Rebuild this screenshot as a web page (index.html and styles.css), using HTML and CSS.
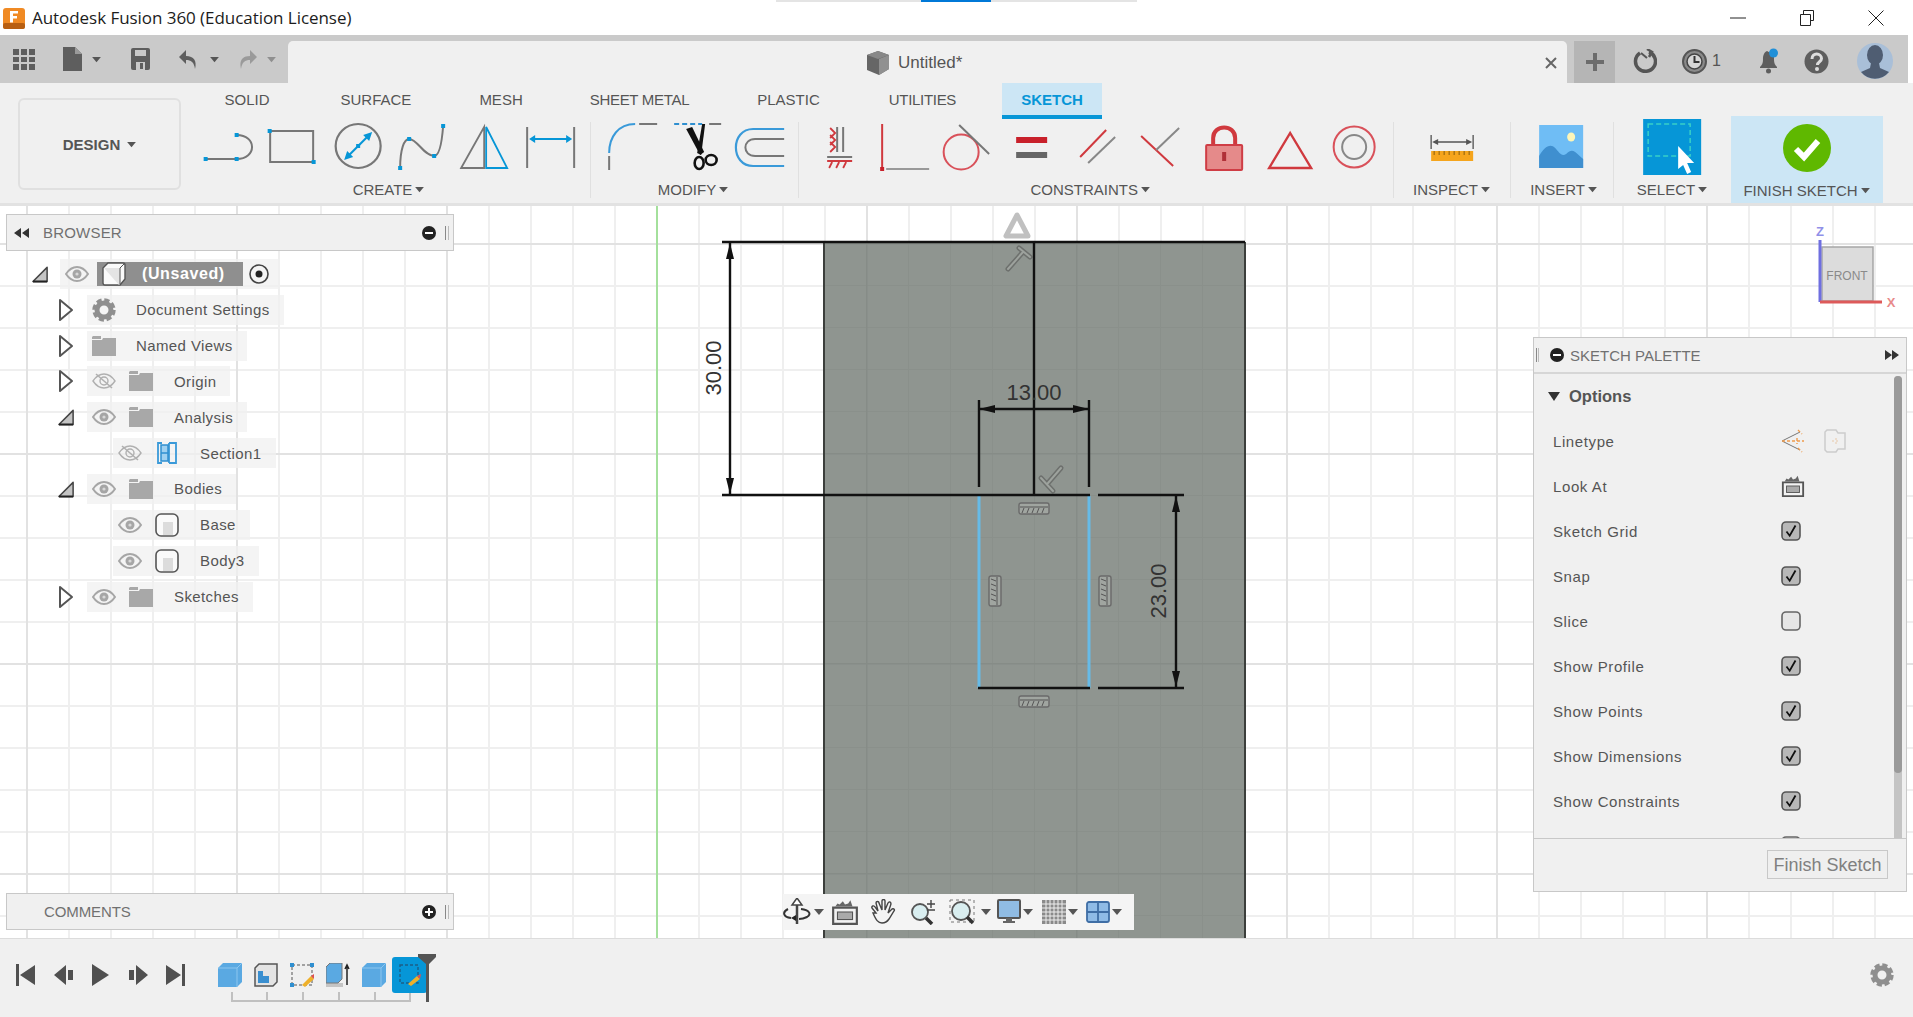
FILE: index.html
```html
<!DOCTYPE html>
<html lang="en">
<head>
<meta charset="utf-8">
<title>Autodesk Fusion 360</title>
<link rel="stylesheet" href="styles.css">
</head>
<body>
<svg class="defs" width="0" height="0">
  <defs>
    <symbol id="eye" viewBox="0 0 24 16"><path d="M1 8C5 2 9 1 12 1s7 1 11 7c-4 6-8 7-11 7S5 14 1 8z" fill="none" stroke="#a6a6a6" stroke-width="2"/><circle cx="12" cy="8" r="4.500" fill="#a6a6a6"/><circle cx="12" cy="8" r="1.600" fill="#d8d8d8"/></symbol>
    <symbol id="eye-off" viewBox="0 0 24 16"><path d="M1 8C5 2 9 1 12 1s7 1 11 7c-4 6-8 7-11 7S5 14 1 8z" fill="none" stroke="#b0b0b0" stroke-width="1.400"/><circle cx="12" cy="8" r="4" fill="none" stroke="#b0b0b0" stroke-width="1.400"/><path d="M4 1l16 14" stroke="#b0b0b0" stroke-width="1.600"/></symbol>
    <symbol id="folder" viewBox="0 0 24 20"><path d="M0 3h9v-3H1L0 1zM0 4h10l1-2h13v18H0z" fill="#a8a8a8"/></symbol>
    <symbol id="body" viewBox="0 0 24 24"><rect x="1" y="1" width="22" height="22" rx="5" fill="#fafafa" stroke="#555" stroke-width="1.600"/><rect x="8" y="9" width="10" height="13" fill="#dcdcdc"/></symbol>
    <symbol id="root-cube" viewBox="0 0 24 24"><path d="M6 1h15a2 2 0 0 1 2 2v14l-5 6H3a2 2 0 0 1-2-2V6z" fill="#fafafa" stroke="#555" stroke-width="1.400"/><path d="M2 6h16v17h-1" fill="#e4e4e4"/><path d="M18 6v17M18 6l5-5" stroke="#555" stroke-width="1"/></symbol>
    <symbol id="open" viewBox="0 0 16 24"><path d="M2 2l12 10L2 22z" fill="#fff" stroke="#555" stroke-width="2" stroke-linejoin="round"/></symbol>
    <symbol id="closed" viewBox="0 0 18 18"><path d="M1 17L16 2v15z" fill="#c4c4c4" stroke="#444" stroke-width="1.600" stroke-linejoin="round"/><path d="M1 17h15" stroke="#222" stroke-width="2"/></symbol>
    <symbol id="caret" viewBox="0 0 10 8"><path d="M0 1h10L5 7z" fill="#555"/></symbol>
    <symbol id="gear" viewBox="0 0 24 24"><circle cx="12" cy="12" r="7" fill="none" stroke="#8f8f8f" stroke-width="5"/><circle cx="12" cy="12" r="9.700" fill="none" stroke="#8f8f8f" stroke-width="4" stroke-dasharray="5 2.620"/></symbol>
    <symbol id="check" viewBox="0 0 20 20"><rect x="1" y="1" width="18" height="18" rx="4" fill="#b8b8b8" stroke="#555" stroke-width="1.600"/><path d="M5.500 10.500l3.200 4.200L14.500 4.500" fill="none" stroke="#111" stroke-width="1.800"/></symbol>
    <symbol id="uncheck" viewBox="0 0 20 20"><rect x="1" y="1" width="18" height="18" rx="4" fill="#e6e6e6" stroke="#666" stroke-width="1.600"/></symbol>
    <symbol id="lookat" viewBox="0 0 26 24"><path d="M2 8h22v15H2z" fill="#f2f2f2" stroke="#555" stroke-width="2"/><rect x="6" y="12" width="14" height="7" fill="#aaa" stroke="#555"/><path d="M4 7l2-3 2 1 3-3 2 3 3-1 2-3 2 6" fill="#666"/></symbol>
    <symbol id="hatch-h" viewBox="0 0 32 13"><rect x="1" y="1" width="30" height="11" rx="2" fill="#a0a5a0" stroke="#6a6a6a" stroke-width="1.400"/><path d="M2 5h28" stroke="#555"/><path d="M6 6l-2 5M11 6l-2 5M16 6l-2 5M21 6l-2 5M26 6l-2 5" stroke="#555"/></symbol>
    <symbol id="hatch-v" viewBox="0 0 14 32"><rect x="1" y="1" width="12" height="30" rx="2" fill="#a0a5a0" stroke="#6a6a6a" stroke-width="1.400"/><path d="M9 2v28" stroke="#555"/><path d="M8 6L3 4M8 11L3 9M8 16l-5-2M8 21l-5-2M8 26l-5-2" stroke="#555"/></symbol>
    <symbol id="cube-blue" viewBox="0 0 24 24"><path d="M0 5l5-5h19v19l-5 5H0z" fill="#5aa9e2"/><path d="M0 5h19v19M19 5l5-5" fill="none" stroke="#8cc6ef" stroke-width="1"/></symbol>
    <pattern id="minor" x="26" y="243" width="42" height="42" patternUnits="userSpaceOnUse"><path d="M0 0V42M0 0H42" stroke="#8a908b" stroke-width="2"/></pattern>
    <pattern id="major" x="26" y="243" width="210" height="210" patternUnits="userSpaceOnUse"><path d="M0 0V210M0 0H210" stroke="#868c87" stroke-width="3"/></pattern>
  </defs>
</svg>

<div class="winbar-sliver"><span class="sliver-blue"></span></div>

<header class="titlebar">
  <svg class="app-logo" width="22" height="21" viewBox="0 0 22 21"><rect width="22" height="21" rx="3" fill="#f08a24"/><rect y="15" width="22" height="6" rx="2" fill="#b85f12"/><path d="M7 3h8v2.500H10v2.500h4v2.500h-4v4H7z" fill="#fff"/></svg>
  <span class="app-title">Autodesk Fusion 360 (Education License)</span>
  <div class="win-controls">
    <svg width="16" height="16" viewBox="0 0 16 16"><path d="M0 8h16" stroke="#222"/></svg>
    <svg width="16" height="16" viewBox="0 0 16 16"><path d="M1.500 4.500h10v11h-10zM4.500 4V.5h10v10H12" fill="none" stroke="#222"/></svg>
    <svg width="16" height="16" viewBox="0 0 16 16"><path d="M.5.5l15 15M15.500.5l-15 15" stroke="#222"/></svg>
  </div>
</header>

<div class="tabstrip">
  <div class="qat">
    <svg class="q-grid" width="22" height="21" viewBox="0 0 22 21"><path d="M0 0h6v6H0zM8 0h6v6H8zM16 0h6v6h-6zM0 8h6v5H0zM8 8h6v5H8zM16 8h6v5h-6zM0 15h6v6H0zM8 15h6v6H8zM16 15h6v6h-6z" fill="#5e5e5e"/></svg>
    <svg class="q-file" width="19" height="24" viewBox="0 0 19 24"><path d="M0 0h12l7 7v17H0z" fill="#5e5e5e"/><path d="M12 0v7h7" fill="#9a9a9a"/></svg>
    <svg class="q-caret" width="9" height="7"><use href="#caret"/></svg>
    <svg class="q-save" width="19" height="22" viewBox="0 0 19 22"><path d="M0 2a2 2 0 0 1 2-2h15a2 2 0 0 1 2 2v18a2 2 0 0 1-2 2H2a2 2 0 0 1-2-2z" fill="#5e5e5e"/><path d="M4 2h11v6H4zM5 14h9v8H5z" fill="#c9c9c9"/><path d="M9 15h3v6H9z" fill="#5e5e5e"/></svg>
    <svg class="q-undo" width="20" height="21" viewBox="0 0 20 21"><path d="M8 1L1 8l7 7v-4c5 0 8 2 9 9 2-8-1-13-9-13z" fill="#5e5e5e"/></svg>
    <svg class="q-caret2" width="9" height="7"><use href="#caret"/></svg>
    <svg class="q-redo" width="20" height="21" viewBox="0 0 20 21"><path d="M12 1l7 7-7 7v-4c-5 0-8 2-9 9-2-8 1-13 9-13z" fill="#9a9a9a"/></svg>
    <svg class="q-caret3 faded" width="9" height="7"><use href="#caret"/></svg>
  </div>
  <div class="doc-tab">
    <svg class="doc-cube" width="24" height="24" viewBox="0 0 24 24"><path d="M12 0l11 4v14l-10 6-12-5V4z" fill="#666"/><path d="M1 4l11 4 11-4-11-4z" fill="#888"/><path d="M13 8l10-4v14l-10 6z" fill="#909090"/></svg>
    <span class="doc-name">Untitled*</span>
    <svg class="doc-close" width="12" height="12" viewBox="0 0 12 12"><path d="M1 1l10 10M11 1L1 11" stroke="#666" stroke-width="2"/></svg>
  </div>
  <div class="plus-box"><svg width="18" height="18" viewBox="0 0 18 18"><path d="M7 0h4v7h7v4h-7v7H7v-7H0V7h7z" fill="#6c6c6c"/></svg></div>
  <div class="user-tools">
    <svg class="u-job" width="25" height="25" viewBox="0 0 25 25"><path d="M8 4a10 10 0 1 0 9-1" fill="none" stroke="#555" stroke-width="3.500"/><path d="M15 0l5 3-3 5" fill="none" stroke="#555" stroke-width="2.500"/><path d="M9 4l6 5" stroke="#555" stroke-width="2"/></svg>
    <svg class="u-clock" width="25" height="25" viewBox="0 0 25 25"><circle cx="12.500" cy="12.500" r="11.500" fill="#8a8a8a" stroke="#555" stroke-width="2"/><circle cx="12.500" cy="12.500" r="7.500" fill="#d6d6d6" stroke="#444" stroke-width="1.500"/><path d="M12.500 7v6h5" fill="none" stroke="#333" stroke-width="2"/></svg>
    <span class="u-count">1</span>
    <svg class="u-bell" width="20" height="26" viewBox="0 0 20 26"><path d="M8 3c-4 2-4 6-4 9 0 3-1 5-3 7v1h17v-1c-2-2-3-4-3-7V7z" fill="#5e5e5e"/><circle cx="9.500" cy="23" r="2.500" fill="#5e5e5e"/><circle cx="14.500" cy="5" r="4.500" fill="#1f8fd8"/></svg>
    <svg class="u-help" width="25" height="25" viewBox="0 0 25 25"><circle cx="12.500" cy="12.500" r="12" fill="#5e5e5e"/><path d="M8 10c0-7 9.500-6 9.500-.500 0 3.500-4 3-4 6.500" fill="none" stroke="#ddd" stroke-width="3"/><circle cx="13" cy="20" r="2" fill="#ddd"/></svg>
    <svg class="u-avatar" width="36" height="36" viewBox="0 0 36 36"><circle cx="18" cy="18" r="18" fill="#a9bfd8"/><ellipse cx="18" cy="12" rx="8" ry="10" fill="#4f5d72"/><path d="M14 20h8l1 5 9 4a18 18 0 0 1-28 0l9-4z" fill="#4f5d72"/></svg>
  </div>
</div>

<section class="ribbon">
  <div class="design-btn"><span>DESIGN</span><svg width="9" height="7"><use href="#caret"/></svg></div>
  <div class="ribbon-main">
    <nav class="tabs">
      <span class="tab t-solid">SOLID</span>
      <span class="tab t-surface">SURFACE</span>
      <span class="tab t-mesh">MESH</span>
      <span class="tab t-sheet">SHEET METAL</span>
      <span class="tab t-plastic">PLASTIC</span>
      <span class="tab t-util">UTILITIES</span>
      <span class="tab tab-active">SKETCH</span>
    </nav>
    <div class="groups">
      <div class="group g-create">
        <div class="tools">
          <svg class="tool" viewBox="0 0 64 56"><path d="M8.500 40h31M39.500 16C60 16 60 40 39.500 40" fill="none" stroke="#777" stroke-width="2"/><path d="M6.500 38h4v4h-4zM37.500 38h4v4h-4zM37.500 14h4v4h-4z" fill="#0696d7"/></svg>
          <svg class="tool" viewBox="0 0 64 56"><path d="M9 12h43v31H9z" fill="none" stroke="#777" stroke-width="2"/><path d="M6.500 10h4v4h-4zM50.500 41h4v4h-4z" fill="#0696d7"/></svg>
          <svg class="tool" viewBox="0 0 64 56"><ellipse cx="32" cy="27" rx="22.500" ry="22" fill="none" stroke="#777" stroke-width="2.200"/><path d="M22 37l20-20" stroke="#0696d7" stroke-width="2"/><path d="M18 41l3-9 6 6zM46 13l-3 9-6-6z" fill="#0696d7"/><path d="M30 25h4v4h-4z" fill="#0696d7"/></svg>
          <svg class="tool" viewBox="0 0 64 56"><path d="M10 49C10 30 14 20 19 20 27 20 34 37 44 37 50 37 52 20 53 7" fill="none" stroke="#777" stroke-width="2"/><path d="M8 47h4v4H8zM17 18h4v4h-4zM42 35h4v4h-4zM51 5h4v4h-4z" fill="#0696d7"/></svg>
          <svg class="tool" viewBox="0 0 64 56"><path d="M7 49L30 8v41z" fill="none" stroke="#777" stroke-width="1.800"/><path d="M32 8l21 41H32z" fill="none" stroke="#0696d7" stroke-width="1.800"/></svg>
          <svg class="tool" viewBox="0 0 64 56"><path d="M8 8v41M55 8v41" stroke="#777" stroke-width="2"/><path d="M12 20h39" stroke="#0696d7" stroke-width="2"/><path d="M10 20l6-4v8zM53 20l-6-4v8z" fill="#0696d7"/></svg>
        </div>
        <div class="glabel l-create">CREATE<svg width="9" height="7"><use href="#caret"/></svg></div>
      </div>
      <div class="sep"></div>
      <div class="group g-modify">
        <div class="tools">
          <svg class="tool" viewBox="0 0 64 56"><path d="M9 34C9 18 18 5 35 5" fill="none" stroke="#3a9ad9" stroke-width="2"/><path d="M39 5h18M9 37v14" stroke="#777" stroke-width="2"/></svg>
          <svg class="tool" viewBox="0 0 64 56"><path d="M10 5h28" stroke="#2f8fd0" stroke-width="2" stroke-dasharray="5 3"/><path d="M45 5h12" stroke="#777" stroke-width="2"/><path d="M22 10l14 26 4-3L28 8z" fill="#111"/><path d="M38 5l-5 29 4 2 4-31z" fill="#111"/><ellipse cx="35" cy="44" rx="4.500" ry="6" fill="none" stroke="#111" stroke-width="2.600"/><ellipse cx="47" cy="41" rx="5.500" ry="5" fill="none" stroke="#111" stroke-width="2.600"/></svg>
          <svg class="tool" viewBox="0 0 64 56"><path d="M56 10H25C2 10 2 47 25 47H56" fill="none" stroke="#3a9ad9" stroke-width="2.200"/><path d="M56 20H27C14 20 14 37 27 37H56" fill="none" stroke="#777" stroke-width="2"/></svg>
        </div>
        <div class="glabel l-modify">MODIFY<svg width="9" height="7"><use href="#caret"/></svg></div>
      </div>
      <div class="sep"></div>
      <div class="group g-constraints">
        <div class="tools">
          <svg class="tool" viewBox="0 0 64 56"><path d="M29 8v25M35 8v25M19 38h25" stroke="#777" stroke-width="2"/><path d="M19 42h25" stroke="#d0393e" stroke-width="2"/><path d="M22 9l5 5-5 5M22 16l5 5-5 5M22 23l5 5-5 5M24 43l-3 6M31 43l-3 6M38 43l-3 6" fill="none" stroke="#d0393e" stroke-width="1.800"/></svg>
          <svg class="tool" viewBox="0 0 64 56"><path d="M14 50h43" stroke="#999" stroke-width="2"/><path d="M10 5v43" stroke="#d0393e" stroke-width="2"/><path d="M8 48h4v4H8z" fill="#c8202a"/></svg>
          <svg class="tool" viewBox="0 0 64 56"><circle cx="25" cy="33" r="17.500" fill="none" stroke="#d9515a" stroke-width="2"/><path d="M23 6l30 29" stroke="#777" stroke-width="2"/></svg>
          <svg class="tool" viewBox="0 0 64 56"><path d="M16 18h31v6H16z" fill="#c8202a"/><path d="M16 33h31v6H16z" fill="#666"/></svg>
          <svg class="tool" viewBox="0 0 64 56"><path d="M15 38l26-27" stroke="#d0393e" stroke-width="2"/><path d="M23 44l27-26" stroke="#888" stroke-width="2"/></svg>
          <svg class="tool" viewBox="0 0 64 56"><path d="M12 17l32 30" stroke="#d0393e" stroke-width="2"/><path d="M50 9L27 31" stroke="#888" stroke-width="2"/></svg>
          <svg class="tool" viewBox="0 0 64 56"><path d="M20 27V19c0-14 22-14 22 0v8" fill="none" stroke="#d0393e" stroke-width="4"/><rect x="13" y="26" width="36" height="25" rx="1" fill="#e58a8a" stroke="#cf3d45" stroke-width="2"/><rect x="29" y="33" width="4" height="9" fill="#b03038"/></svg>
          <svg class="tool" viewBox="0 0 64 56"><path d="M11 49h42L32 14z" fill="none" stroke="#d0393e" stroke-width="2.400"/></svg>
          <svg class="tool" viewBox="0 0 64 56"><circle cx="32" cy="28" r="20.500" fill="none" stroke="#d9515a" stroke-width="2"/><circle cx="32" cy="28" r="12" fill="none" stroke="#888" stroke-width="2"/></svg>
        </div>
        <div class="glabel l-constraints">CONSTRAINTS<svg width="9" height="7"><use href="#caret"/></svg></div>
      </div>
      <div class="sep"></div>
      <div class="group g-inspect">
        <div class="tools">
          <svg class="tool" viewBox="0 0 64 56"><path d="M12 16v14M54 16v14" stroke="#666" stroke-width="1.500"/><path d="M15 23h36" stroke="#555" stroke-width="1.500"/><path d="M13 23l6-3v6zM53 23l-6-3v6z" fill="#555"/><rect x="12" y="32" width="42" height="10" fill="#f5a51d"/><path d="M15 32v4M20 32v4M25 32v4M30 32v4M35 32v4M40 32v4M45 32v4M50 32v4" stroke="#8a6010"/></svg>
        </div>
        <div class="glabel">INSPECT<svg width="9" height="7"><use href="#caret"/></svg></div>
      </div>
      <div class="sep"></div>
      <div class="group g-insert">
        <div class="tools">
          <svg class="tool" viewBox="0 0 64 56"><rect x="10" y="6" width="44" height="43" fill="#6fbdf5"/><ellipse cx="42" cy="18" rx="4" ry="4.500" fill="#fdf5b8"/><path d="M10 49V37c5-9 11-13 16-8 4 4 6 9 11 6 4-4 6-4 9-2 3 2 5 5 8 7v9z" fill="#3f8fcf"/></svg>
        </div>
        <div class="glabel l-insert">INSERT<svg width="9" height="7"><use href="#caret"/></svg></div>
      </div>
      <div class="sep"></div>
      <div class="group g-select">
        <div class="tools">
          <svg class="tool" viewBox="0 0 64 56"><rect x="3" y="0" width="58" height="56" fill="#0696d7"/><rect x="8" y="5" width="42" height="32" fill="none" stroke="#39d0c8" stroke-width="1.500" stroke-dasharray="5 3"/><path d="M38 27l16 17-7 0 4 9-4 2-4-9-5 4z" fill="#fff"/></svg>
        </div>
        <div class="glabel">SELECT<svg width="9" height="7"><use href="#caret"/></svg></div>
      </div>
      <div class="group g-finish">
        <svg class="finish-icon" width="48" height="48" viewBox="0 0 48 48"><circle cx="24" cy="24" r="24" fill="#5fb800"/><path d="M13 25l8 8 14-16" fill="none" stroke="#fff" stroke-width="6"/></svg>
        <div class="glabel">FINISH SKETCH<svg width="9" height="7"><use href="#caret"/></svg></div>
      </div>
    </div>
  </div>
</section>

<main class="canvas">
  <svg class="sketch" viewBox="0 206 1913 732" width="1913" height="732">
    <path d="M657 206V938" stroke="#a4e09c" stroke-width="2"/>
    <rect x="824" y="242" width="421" height="696" fill="#8f9590"/>
    <rect x="824" y="242" width="421" height="696" fill="url(#minor)"/>
    <rect x="824" y="242" width="421" height="696" fill="url(#major)"/>
    <path d="M824 242V938M1245 242V938" stroke="#3c3f3c" stroke-width="2"/>
    <path d="M1017 215l-11 21h22z" fill="#fff" stroke="#c0c0c0" stroke-width="5" stroke-linejoin="round"/>
    <path d="M1017 222l-5 10h10z" fill="#fff"/>
    <g fill="none" stroke="#6d706d" stroke-width="5" stroke-linecap="round"><path d="M1008 269l15-17M1019 248l11 9"/><path d="M1061 468l-13 15M1041 478l12 13"/></g>
    <g fill="none" stroke="#9da29d" stroke-width="2" stroke-linecap="round"><path d="M1008 269l15-17M1019 248l11 9"/><path d="M1061 468l-13 15M1041 478l12 13"/></g>
    <use href="#hatch-h" x="1018" y="502" width="32" height="13"/>
    <use href="#hatch-h" x="1018" y="695" width="32" height="13"/>
    <use href="#hatch-v" x="988" y="575" width="14" height="32"/>
    <use href="#hatch-v" x="1098" y="575" width="14" height="32"/>
    <path d="M979 496V688M1089 496V688" stroke="#66bbe8" stroke-width="3"/>
    <g stroke="#111" stroke-width="2.400" fill="none">
      <path d="M722 242H1245M722 495H1090M1098 495H1184M978 688H1090M1098 688H1184"/>
      <path d="M730 243V494M1034 242V495M979 400V487M1089 400V487M979 409H1089M1176 496V687"/>
    </g>
    <g fill="#111">
      <path d="M730 243l-4 16h8zM730 494l-4-16h8z"/>
      <path d="M979 409l16-4v8zM1089 409l-16-4v8z"/>
      <path d="M1176 496l-4 16h8zM1176 687l-4-16h8z"/>
    </g>
    <text class="dim" x="1034" y="400" text-anchor="middle">13.00</text>
    <text class="dim" transform="translate(721 368) rotate(-90)" text-anchor="middle">30.00</text>
    <text class="dim" transform="translate(1166 591) rotate(-90)" text-anchor="middle">23.00</text>
    <rect x="1822" y="247" width="51" height="54" fill="#dcdcdc" stroke="#a6a6a6" stroke-width="1.500"/>
    <text class="nav-face" x="1847" y="280" text-anchor="middle">FRONT</text>
    <path d="M1820 240V302" stroke="#6f6fe0" stroke-width="3"/>
    <path d="M1820 302H1882" stroke="#dd5a5a" stroke-width="3"/>
    <text class="nav-z" x="1820" y="236" text-anchor="middle">Z</text>
    <text class="nav-x" x="1891" y="307" text-anchor="middle">X</text>
  </svg>

  <aside class="browser">
    <div class="panel-head">
      <svg class="rew" width="15" height="10" viewBox="0 0 15 10"><path d="M7 0v10L0 5zM15 0v10L8 5z" fill="#333"/></svg>
      <span class="panel-title">BROWSER</span>
      <svg class="minus" width="14" height="14" viewBox="0 0 14 14"><circle cx="7" cy="7" r="7" fill="#222"/><path d="M3 6h8v2H3z" fill="#fff"/></svg>
      <span class="grip"></span>
    </div>
    <div class="tree">
      <div class="row d0">
        <svg class="twist-c" width="17" height="18"><use href="#closed"/></svg>
        <div class="pill root-pill">
          <svg class="slot-eye" width="24" height="16"><use href="#eye"/></svg>
          <div class="root-name"><svg width="24" height="24"><use href="#root-cube"/></svg><span>(Unsaved)</span></div>
          <svg class="radio" width="20" height="20" viewBox="0 0 20 20"><circle cx="10" cy="10" r="9" fill="#f4f4f4" stroke="#444" stroke-width="1.600"/><circle cx="10" cy="10" r="3.500" fill="#222"/></svg>
        </div>
      </div>
      <div class="row d1">
        <svg class="twist-o" width="16" height="24"><use href="#open"/></svg>
        <div class="pill"><svg class="slot-eye" width="24" height="24"><use href="#gear"/></svg><span class="label wide">Document Settings</span></div>
      </div>
      <div class="row d1">
        <svg class="twist-o" width="16" height="24"><use href="#open"/></svg>
        <div class="pill"><svg class="slot-eye" width="24" height="20"><use href="#folder"/></svg><span class="label wide">Named Views</span></div>
      </div>
      <div class="row d1">
        <svg class="twist-o" width="16" height="24"><use href="#open"/></svg>
        <div class="pill"><svg class="slot-eye" width="24" height="16"><use href="#eye-off"/></svg><svg class="slot-ico" width="24" height="20"><use href="#folder"/></svg><span class="label">Origin</span></div>
      </div>
      <div class="row d1">
        <svg class="twist-c" width="17" height="18"><use href="#closed"/></svg>
        <div class="pill"><svg class="slot-eye" width="24" height="16"><use href="#eye"/></svg><svg class="slot-ico" width="24" height="20"><use href="#folder"/></svg><span class="label">Analysis</span></div>
      </div>
      <div class="row d2">
        <div class="pill"><svg class="slot-eye" width="24" height="16"><use href="#eye-off"/></svg><svg class="slot-ico" width="24" height="24" viewBox="0 0 24 24"><path d="M7 2H3v20h4M14 2h7v20h-7M14 2v20" fill="none" stroke="#3a9ad9" stroke-width="1.800"/><rect x="6" y="4" width="7" height="16" fill="#9fd0f0" stroke="#2f8fd0" stroke-width="1.500"/><path d="M6 12h7" stroke="#2f8fd0" stroke-width="1.500"/></svg><span class="label">Section1</span></div>
      </div>
      <div class="row d1">
        <svg class="twist-c" width="17" height="18"><use href="#closed"/></svg>
        <div class="pill"><svg class="slot-eye" width="24" height="16"><use href="#eye"/></svg><svg class="slot-ico" width="24" height="20"><use href="#folder"/></svg><span class="label">Bodies</span></div>
      </div>
      <div class="row d2">
        <div class="pill"><svg class="slot-eye" width="24" height="16"><use href="#eye"/></svg><svg class="slot-ico" width="24" height="24"><use href="#body"/></svg><span class="label">Base</span></div>
      </div>
      <div class="row d2">
        <div class="pill"><svg class="slot-eye" width="24" height="16"><use href="#eye"/></svg><svg class="slot-ico" width="24" height="24"><use href="#body"/></svg><span class="label">Body3</span></div>
      </div>
      <div class="row d1">
        <svg class="twist-o" width="16" height="24"><use href="#open"/></svg>
        <div class="pill"><svg class="slot-eye" width="24" height="16"><use href="#eye"/></svg><svg class="slot-ico" width="24" height="20"><use href="#folder"/></svg><span class="label">Sketches</span></div>
      </div>
    </div>
  </aside>

  <aside class="comments panel-head">
    <span class="panel-title indent">COMMENTS</span>
    <svg class="minus" width="14" height="14" viewBox="0 0 14 14"><circle cx="7" cy="7" r="7" fill="#222"/><path d="M3 6h8v2H3zM6 3h2v8H6z" fill="#fff"/></svg>
    <span class="grip"></span>
  </aside>

  <div class="navbar">
    <svg width="28" height="28" viewBox="0 0 28 28"><path d="M14 2v24" stroke="#444" stroke-width="2.500"/><path d="M14 0l-5 7h10z" fill="#fff" stroke="#444" stroke-width="1.500"/><path d="M5 11C-1 14 0 19 8 20M18 11c8 1 11 5 6 8-2 1-5 2-8 2" fill="none" stroke="#333" stroke-width="2"/><path d="M8 20l5-3v6z" fill="#222"/></svg>
    <svg class="ncaret m3" width="10" height="8"><use href="#caret"/></svg>
    <svg class="m7" width="28" height="26"><use href="#lookat"/></svg>
    <svg class="m12" width="26" height="26" viewBox="0 0 26 26"><path d="M5 14L1 9c-1-2 2-3 3-1l3 4L5 4c0-2 3-2 3 0l3 7V2c0-2 3-2 3 0v9l3-7c1-2 3-1 3 1l-3 9 4-4c2-1 3 1 2 2l-5 8c-2 3-4 4-7 4-4 0-6-3-9-10z" fill="#f4f4f4" stroke="#444" stroke-width="1.400"/></svg>
    <svg class="m13" width="26" height="26" viewBox="0 0 26 26"><circle cx="10" cy="13" r="8" fill="#d9eef0" stroke="#555" stroke-width="1.800"/><path d="M16 19l6 6" stroke="#333" stroke-width="3.500"/><path d="M17 5h8M21 1v8M17 11h8" stroke="#444" stroke-width="1.400"/></svg>
    <svg class="m13" width="26" height="26" viewBox="0 0 26 26"><path d="M1 1h24v22H1z" fill="none" stroke="#777" stroke-dasharray="3 3"/><circle cx="12" cy="12" r="9" fill="#d9eef0" stroke="#555" stroke-width="1.800"/><path d="M18 18l6 6" stroke="#333" stroke-width="3.500"/></svg>
    <svg class="ncaret m6" width="10" height="8"><use href="#caret"/></svg>
    <svg class="m6" width="24" height="26" viewBox="0 0 24 26"><rect x="1" y="1" width="22" height="18" rx="1" fill="#90bce4" stroke="#555" stroke-width="2"/><path d="M9 19h6v3h3v2H6v-2h3z" fill="#666"/></svg>
    <svg class="ncaret m2" width="10" height="8"><use href="#caret"/></svg>
    <svg class="m9" width="24" height="24" viewBox="0 0 24 24"><rect width="24" height="24" fill="#8a8a8a"/><path d="M4 0v24M8 0v24M12 0v24M16 0v24M20 0v24M0 4h24M0 8h24M0 12h24M0 16h24M0 20h24" stroke="#eee"/></svg>
    <svg class="ncaret m2" width="10" height="8"><use href="#caret"/></svg>
    <svg class="m8" width="24" height="22" viewBox="0 0 24 22"><rect x="1" y="1" width="22" height="20" rx="2" fill="#8fbbe6" stroke="#3f6ea5" stroke-width="1.800"/><path d="M12 1v20M1 11h22" stroke="#3f6ea5" stroke-width="1.800"/></svg>
    <svg class="ncaret m2" width="10" height="8"><use href="#caret"/></svg>
  </div>

  <aside class="palette">
    <div class="pal-head">
      <span class="pal-grip"></span>
      <svg width="14" height="14" viewBox="0 0 14 14"><circle cx="7" cy="7" r="7" fill="#222"/><path d="M3 6h8v2H3z" fill="#fff"/></svg>
      <span class="panel-title">SKETCH PALETTE</span>
      <svg class="ff" width="14" height="10" viewBox="0 0 14 10"><path d="M0 0v10l7-5zM7 0v10l7-5z" fill="#333"/></svg>
    </div>
    <div class="pal-body">
      <div class="opt opt-head"><svg width="12" height="9" viewBox="0 0 12 9"><path d="M0 0h12L6 9z" fill="#333"/></svg><span>Options</span></div>
      <div class="opt"><span class="opt-label">Linetype</span>
        <svg class="opt-slot" width="24" height="26" viewBox="0 0 24 26"><path d="M1 13l18-9M1 13l18 9" fill="none" stroke="#777"/><path d="M1 13h22M17 2l4 4M17 20l4 4M16 10v6" stroke="#ef9a4b" stroke-width="1.400" stroke-dasharray="3 2" fill="none"/></svg>
        <svg class="opt-slot2" width="24" height="24" viewBox="0 0 24 24"><path d="M3 1h9l2 3h7v16h-7l-2 3H3l-2-2V3z" fill="none" stroke="#ccc" stroke-width="1.500"/><path d="M8 12h8M12 9v6" stroke="#e8c8a8" stroke-dasharray="2 2"/></svg>
      </div>
      <div class="opt"><span class="opt-label">Look At</span><svg class="opt-slot" width="24" height="24" viewBox="0 0 26 24"><use href="#lookat" width="26" height="24"/></svg></div>
      <div class="opt"><span class="opt-label">Sketch Grid</span><svg class="opt-slot" width="20" height="20"><use href="#check"/></svg></div>
      <div class="opt"><span class="opt-label">Snap</span><svg class="opt-slot" width="20" height="20"><use href="#check"/></svg></div>
      <div class="opt"><span class="opt-label">Slice</span><svg class="opt-slot" width="20" height="20"><use href="#uncheck"/></svg></div>
      <div class="opt"><span class="opt-label">Show Profile</span><svg class="opt-slot" width="20" height="20"><use href="#check"/></svg></div>
      <div class="opt"><span class="opt-label">Show Points</span><svg class="opt-slot" width="20" height="20"><use href="#check"/></svg></div>
      <div class="opt"><span class="opt-label">Show Dimensions</span><svg class="opt-slot" width="20" height="20"><use href="#check"/></svg></div>
      <div class="opt"><span class="opt-label">Show Constraints</span><svg class="opt-slot" width="20" height="20"><use href="#check"/></svg></div>
      <div class="opt"><span class="opt-label"></span><svg class="opt-slot" width="20" height="20"><use href="#uncheck"/></svg></div>
      <div class="scroll"><div class="thumb"></div></div>
    </div>
    <div class="pal-foot"><span class="finish-btn">Finish Sketch</span></div>
  </aside>
</main>

<footer class="timeline">
  <div class="transport">
    <svg width="19" height="22" viewBox="0 0 19 22"><path d="M0 0h3v22H0zM19 1v20L4 11z" fill="#505050"/></svg>
    <svg width="19" height="22" viewBox="0 0 19 22"><path d="M12 1v20L0 11zM14 6h5v10h-5z" fill="#505050"/></svg>
    <svg width="19" height="22" viewBox="0 0 19 22"><path d="M1 0v22l17-11z" fill="#505050"/></svg>
    <svg width="19" height="22" viewBox="0 0 19 22"><path d="M7 1v20l12-10zM0 6h5v10H0z" fill="#505050"/></svg>
    <svg width="19" height="22" viewBox="0 0 19 22"><path d="M16 0h3v22h-3zM0 1v20l15-10z" fill="#505050"/></svg>
  </div>
  <div class="features">
    <svg class="rail" width="180" height="10" viewBox="0 0 180 10"><path d="M1 0v9H179V0M36 0v9M72 0v9M108 0v9M144 0v9" fill="none" stroke="#c0c0c0" stroke-width="2"/></svg>
    <svg class="feat" width="24" height="24"><use href="#cube-blue"/></svg>
    <svg class="feat" width="24" height="24" viewBox="0 0 24 24"><path d="M1 5l4-4h18v18l-4 4H1z" fill="#e4e4e4" stroke="#555" stroke-width="1.500"/><path d="M4 8h5v5h6v7H4z" fill="#3a8fd0"/></svg>
    <svg class="feat" width="24" height="24" viewBox="0 0 24 24"><path d="M2 2h20v20H2z" fill="none" stroke="#555" stroke-dasharray="3 2"/><path d="M0 0h4v4H0zM20 0h4v4h-4zM0 20h4v4H0z" fill="#2f8fd0"/><path d="M12 22l9-9 3 3-9 8z" fill="#eeb02a"/><path d="M21 13l3 3 0-5z" fill="#e05050"/></svg>
    <svg class="feat" width="24" height="24" viewBox="0 0 24 24"><path d="M0 20h17v4H0z" fill="#c4c4c4"/><path d="M0 4l4-4h12v16l-4 4H0z" fill="#5aa9e2" stroke="#777"/><path d="M21 22V3M19 6l2-4 2 4" fill="none" stroke="#222" stroke-width="1.500"/></svg>
    <svg class="feat" width="24" height="24"><use href="#cube-blue"/></svg>
    <div class="feat-active">
      <svg width="24" height="24" viewBox="0 0 24 24"><path d="M2 2h18v18H2z" fill="none" stroke="#1c5f88" stroke-width="1.400" stroke-dasharray="3 2"/><path d="M10 21l9-8 3 3-9 7z" fill="#eeb02a"/><path d="M19 13l3 3 1-5z" fill="#e05050"/></svg>
      <svg class="marker" width="18" height="48" viewBox="0 0 18 48"><path d="M0 0h18v3l-7 7v38H8V10L0 3z" fill="#555"/></svg>
    </div>
  </div>
  <svg class="foot-gear" width="24" height="24"><use href="#gear"/></svg>
</footer>
</body>
</html>
```

FILE: styles.css
```css
* { box-sizing: border-box; }
html, body { margin: 0; height: 100%; }
body {
  width: 1913px;
  height: 1017px;
  overflow: hidden;
  position: relative;
  background: #fff;
  font-family: "Liberation Sans", Arial, sans-serif;
  color: #555;
}
svg { display: block; flex: none; }
.defs { position: absolute; }

.winbar-sliver { position: absolute; left: 776px; top: 0; width: 361px; height: 2px; background: #e4e4e4; }
.sliver-blue { position: absolute; left: 145px; top: 0; width: 70px; height: 2px; background: #0078d7; }

.titlebar { height: 35px; display: flex; align-items: center; background: #fff; }
.app-logo { margin: 2px 0 0 3px; }
.app-title { margin-left: 7px; font-family: "Open Sans", sans-serif; font-size: 17px; color: #1c1c1c; letter-spacing: -.05px; }
.win-controls { margin-left: auto; margin-right: 29px; display: flex; gap: 53px; align-items: center; }

.tabstrip { height: 48px; display: flex; width: 1908px; background: #cacaca; }
.qat { width: 288px; flex: none; position: relative; display: flex; align-items: center; }
.q-grid { margin-left: 13px; }
.q-file { margin-left: 28px; }
.q-caret { margin-left: 10px; }
.q-save { margin-left: 30px; }
.q-undo { margin-left: 28px; }
.q-caret2 { margin-left: 12px; }
.q-redo { margin-left: 19px; }
.q-caret3 { margin-left: 9px; }
.faded { opacity: .5; }

.doc-tab { flex: 1; margin-top: 6px; background: #f0f0f0; border-radius: 5px 5px 0 0; display: flex; align-items: center; padding-left: 578px; padding-top: 1px; }
.doc-name { margin-left: 8px; font-size: 17px; color: #555; }
.doc-close { margin-left: auto; margin-right: 10px; }
.plus-box { width: 41px; margin: 6px 0 0 7px; background: #b5b5b5; display: flex; align-items: center; justify-content: center; flex: none; }
.user-tools { width: 293px; flex: none; display: flex; align-items: center; padding-top: 4px; }
.u-job { margin-left: 17px; }
.u-clock { margin-left: 25px; }
.u-count { margin-left: 5px; font-size: 16px; color: #555; width: 9px; }
.u-bell { margin-left: 38px; }
.u-help { margin-left: 25px; }
.u-avatar { margin-left: 28px; }

.ribbon { height: 123px; display: flex; background: #f0f0f0; border-bottom: 3px solid #e2e2e2; }
.design-btn { flex: none; width: 163px; height: 92px; margin: 15px 0 0 18px; border: 2px solid #e0e0e0; border-radius: 6px; display: flex; align-items: center; justify-content: center; gap: 7px; font-size: 15px; font-weight: bold; color: #555; }
.ribbon-main { margin-left: 16.500px; flex: 1; min-width: 0; position: relative; }

.tabs { height: 36px; display: flex; font-size: 15px; color: #555; align-items: flex-start; }
.tab { display: block; line-height: 34px; padding-top: 0; }
.t-solid { margin-left: 27px; }
.t-surface { margin-left: 71px; }
.t-mesh { margin-left: 68px; }
.t-sheet { margin-left: 67px; letter-spacing: -.3px; }
.t-plastic { margin-left: 68px; }
.t-util { margin-left: 69px; letter-spacing: -.3px; }
.tab-active { margin-left: 46px; width: 100px; height: 36px; text-align: center; background: #cce6f5; border-bottom: 4px solid #0696d7; color: #0696d7; font-weight: bold; }

.groups { display: flex; height: 84px; }
.group { display: flex; flex-direction: column; align-items: center; flex: none; }
.tools { display: flex; height: 56px; }
.tool { width: 64.300px; height: 56px; }
.glabel { display: flex; align-items: center; gap: 3px; height: 22px; margin-top: 3px; font-size: 15px; color: #555; white-space: nowrap; }
.sep { width: 1px; height: 76px; margin-top: 3px; background: #e0e0e0; flex: none; }
.g-create { width: 392px; }
.g-create .tools { margin-right: 7px; }
.l-create { margin-left: -10px; }
.g-modify { width: 199px; margin-left: 8px; }
.g-modify .tools { margin-right: 4px; }
.l-modify { margin-left: -10px; }
.g-constraints { width: 585px; margin-left: 9px; align-items: flex-start; }
.l-constraints { margin-left: 223px; }
.g-inspect { width: 116px; }
.g-insert { width: 102px; }
.l-insert { margin-left: 4px; }
.g-select { width: 117px; }
.g-finish { width: 152px; height: 87px; margin-top: -3px; background: #cce6f5; }
.finish-icon { margin: 8px 0 4px; }
.g-finish .glabel { margin-top: 3px; }

.canvas {
  position: relative;
  height: 732px;
  overflow: hidden;
  background-color: #fff;
  background-image:
    linear-gradient(to right, #e2e2e2 2px, transparent 2px),
    linear-gradient(to bottom, #e2e2e2 2px, transparent 2px),
    linear-gradient(to right, #efefef 2px, transparent 2px),
    linear-gradient(to bottom, #efefef 2px, transparent 2px);
  background-size: 210px 100%, 100% 210px, 42px 100%, 100% 42px;
  background-position: 26px 0, 0 37px, 26px 0, 0 37px;
}
.sketch { position: absolute; left: 0; top: 0; }
.dim { font-family: "Liberation Sans", sans-serif; font-size: 22px; fill: #333; }
.nav-face { font-family: "Liberation Sans", sans-serif; font-size: 12px; fill: #8a8a8a; }
.nav-z { font-family: "Liberation Sans", sans-serif; font-size: 13px; fill: #9090e8; font-weight: bold; }
.nav-x { font-family: "Liberation Sans", sans-serif; font-size: 13px; fill: #e88a8a; font-weight: bold; }

.browser { position: absolute; left: 6px; top: 8px; width: 448px; }
.panel-head { height: 37px; display: flex; align-items: center; background: #f0f0f0; border: 1px solid #c8c8c8; font-size: 15px; color: #707070; }
.rew { margin-left: 7px; }
.panel-title { margin-left: 14px; letter-spacing: .2px; }
.minus { margin-left: auto; }
.grip { width: 4px; height: 14px; margin: 0 4px 0 9px; border-left: 1px solid #888; border-right: 1px solid #bbb; }
.indent { margin-left: 37px; letter-spacing: -.1px; }
.comments { position: absolute; left: 6px; top: 687px; width: 448px; }

.tree { padding-top: 5px; }
.row { height: 35.850px; display: flex; align-items: center; font-size: 15px; color: #555; }
.d0 { padding-left: 26px; }
.d1 { padding-left: 52px; }
.d2 { padding-left: 107px; }
.twist-c { width: 28px; padding-right: 11px; margin-right: 0; }
.twist-o { width: 28px; padding-right: 12px; margin-right: 0; }
.d1 .twist-c, .d1 .twist-o { margin-right: 1px; }
.pill { height: 30px; display: flex; align-items: center; padding: 0 14px 0 5px; background: rgba(240,240,240,.75); }
.slot-eye { margin-right: 13px; }
.slot-ico { margin-right: 21px; }
.label { letter-spacing: .4px; white-space: nowrap; }
.wide { margin-left: 7px; }
.root-pill { padding-right: 11px; }
.root-pill .slot-eye { margin-right: 8px; }
.root-name { width: 146px; height: 24px; display: flex; align-items: center; background: #8f8f8f; color: #fff; font-weight: bold; font-size: 16px; padding-left: 5px; }
.root-name span { margin-left: 16px; letter-spacing: .6px; }
.radio { margin-left: 6px; }

.navbar { position: absolute; left: 783px; top: 688px; width: 351px; height: 36px; display: flex; align-items: center; background: #f4f4f4; }
.ncaret { width: 10px; height: 8px; }
.m2 { margin-left: 2px; } .m3 { margin-left: 3px; } .m6 { margin-left: 6px; } .m7 { margin-left: 7px; }
.m8 { margin-left: 8px; } .m9 { margin-left: 9px; } .m12 { margin-left: 12px; } .m13 { margin-left: 13px; }

.palette { position: absolute; left: 1533px; top: 131px; width: 374px; height: 555px; display: flex; flex-direction: column; background: #f0f0f0; border: 1px solid #c8c8c8; }
.pal-head { height: 36px; flex: none; display: flex; align-items: center; border-bottom: 2px solid #d6d6d6; font-size: 15px; color: #707070; padding-right: 7px; }
.pal-grip { width: 3px; height: 14px; margin: 0 11px 0 2px; border-left: 1px solid #888; border-right: 1px solid #bbb; }
.pal-head .panel-title { margin-left: 6px; letter-spacing: 0; }
.ff { margin-left: auto; }
.pal-body { flex: 1; min-height: 0; overflow: hidden; position: relative; padding-top: .5px; }
.opt { height: 45px; display: flex; align-items: center; padding-left: 19px; font-size: 15px; color: #555; }
.opt-head { height: 44px; padding-left: 14px; font-weight: bold; }
.opt-head span { margin-left: 9px; font-size: 16.500px; }
.opt-label { width: 228px; letter-spacing: .6px; flex: none; }
.opt-slot { margin-left: 0; }
.opt-slot2 { margin-left: 19px; }
.scroll { position: absolute; right: 4px; top: 2px; bottom: 0; width: 8px; background: #c4c4c4; border-radius: 4px 4px 0 0; }
.thumb { height: 397px; background: #9a9a9a; border-radius: 4px; }
.pal-foot { height: 53px; flex: none; border-top: 1px solid #c8c8c8; display: flex; justify-content: flex-end; align-items: flex-start; padding: 11px 18px 0 0; }
.finish-btn { width: 121px; height: 29px; border: 1px solid #c8c8c8; background: #efefef; font-size: 18px; line-height: 28px; text-align: center; color: #808080; }

.timeline { height: 79px; background: #f0f0f0; border-top: 1px solid #dcdcdc; display: flex; align-items: center; padding-bottom: 6px; }
.transport { display: flex; gap: 18.500px; margin-left: 16px; }
.features { display: flex; align-items: center; gap: 12px; margin-left: 33px; position: relative; height: 36px; }
.rail { position: absolute; left: 13px; top: 35px; }
.feat-active { width: 35px; height: 36px; margin-left: -6px; background: #0696d7; border-radius: 3px; display: flex; align-items: center; justify-content: center; position: relative; }
.marker { position: absolute; left: 26px; top: -3px; }
.foot-gear { margin-left: auto; margin-right: 19px; }
```
